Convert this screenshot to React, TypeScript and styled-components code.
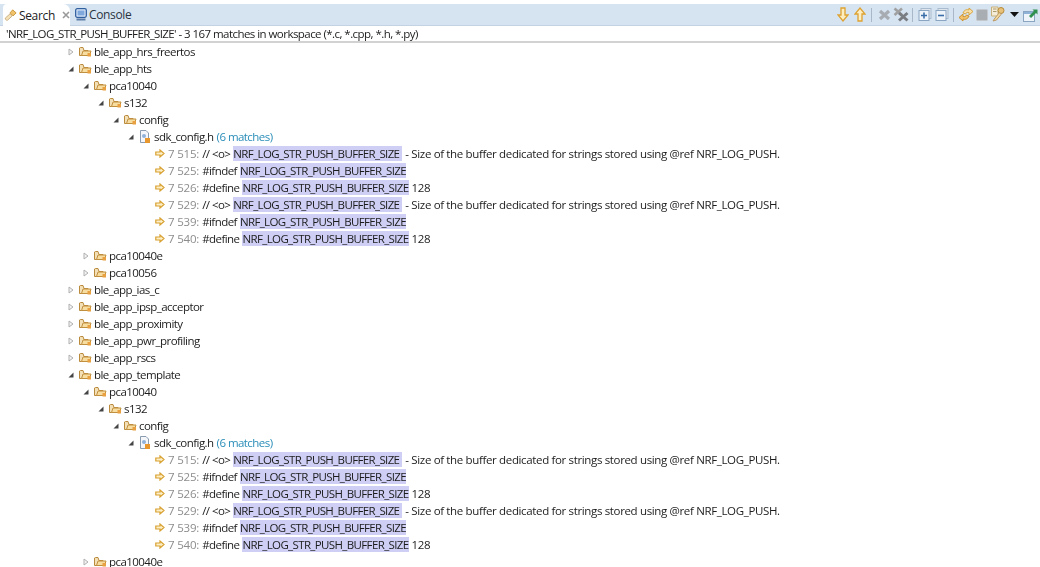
import React from "react";
import styled, { createGlobalStyle } from "styled-components";

const GlobalStyle = createGlobalStyle`
  html, body {
    margin: 0;
    height: 100%;
    overflow: hidden;
    background: #fff;
  }
  body {
    font-family: "Open Sans", "Liberation Sans", sans-serif;
    font-size: 11.5px;
    letter-spacing: -0.55px;
    color: #1c1c1c;
  }
`;

const KEY = "NRF_LOG_STR_PUSH_BUFFER_SIZE";
const DOC = "- Size of the buffer dedicated for strings stored using @ref NRF_LOG_PUSH.";

type Expander = "open" | "closed";
type Row =
  | { kind: "folder"; depth: number; name: string; expander: Expander }
  | { kind: "file"; depth: number; name: string; matches: string }
  | { kind: "match"; line: string; before: string; after?: string; padded?: boolean };

const matchRows: Row[] = [
  { kind: "match", line: "7 515:", before: "// <o>", after: DOC, padded: true },
  { kind: "match", line: "7 525:", before: "#ifndef" },
  { kind: "match", line: "7 526:", before: "#define", after: "128" },
  { kind: "match", line: "7 529:", before: "// <o>", after: DOC, padded: true },
  { kind: "match", line: "7 539:", before: "#ifndef" },
  { kind: "match", line: "7 540:", before: "#define", after: "128" }
];

const rows: Row[] = [
  { kind: "folder", depth: 0, name: "ble_app_hrs_freertos", expander: "closed" },
  { kind: "folder", depth: 0, name: "ble_app_hts", expander: "open" },
  { kind: "folder", depth: 1, name: "pca10040", expander: "open" },
  { kind: "folder", depth: 2, name: "s132", expander: "open" },
  { kind: "folder", depth: 3, name: "config", expander: "open" },
  { kind: "file", depth: 4, name: "sdk_config.h", matches: "(6 matches)" },
  ...matchRows,
  { kind: "folder", depth: 1, name: "pca10040e", expander: "closed" },
  { kind: "folder", depth: 1, name: "pca10056", expander: "closed" },
  { kind: "folder", depth: 0, name: "ble_app_ias_c", expander: "closed" },
  { kind: "folder", depth: 0, name: "ble_app_ipsp_acceptor", expander: "closed" },
  { kind: "folder", depth: 0, name: "ble_app_proximity", expander: "closed" },
  { kind: "folder", depth: 0, name: "ble_app_pwr_profiling", expander: "closed" },
  { kind: "folder", depth: 0, name: "ble_app_rscs", expander: "closed" },
  { kind: "folder", depth: 0, name: "ble_app_template", expander: "open" },
  { kind: "folder", depth: 1, name: "pca10040", expander: "open" },
  { kind: "folder", depth: 2, name: "s132", expander: "open" },
  { kind: "folder", depth: 3, name: "config", expander: "open" },
  { kind: "file", depth: 4, name: "sdk_config.h", matches: "(6 matches)" },
  ...matchRows,
  { kind: "folder", depth: 1, name: "pca10040e", expander: "closed" }
];

const FolderIcon = () => (
  <svg width="13" height="11" viewBox="0 0 13 11">
    <path d="M.5 2V9.5H9V4.5H5L4 1.5H1.5Z" fill="#f3e0b6" stroke="#b98a3c" />
    <path d="M2.5 9.5L4 5H12L10.5 9.5Z" fill="#f8dda0" stroke="#c0903f" />
    <rect x="8.5" y="7" width="3.5" height="3.5" fill="#e8a040" />
  </svg>
);

const FileIcon = () => (
  <svg width="12" height="13" viewBox="0 0 12 13">
    <path d="M1.5.5H7L9.5 3V12.5H1.5Z" fill="#f4f6fa" stroke="#8b9bb0" />
    <circle cx="5" cy="6" r="2" fill="#8fb0d8" />
    <rect x="6" y="8" width="5" height="5" fill="#e8962e" />
  </svg>
);

const MatchArrow = () => (
  <svg width="10" height="9" viewBox="0 0 10 9">
    <path d="M.8 3H5V1L9 4.5 5 8V6H.8Z" fill="#fdf0c8" stroke="#d8a030" strokeWidth="1.2" />
  </svg>
);

const ExpanderIcon = ({ state }: { state: Expander }) =>
  state === "open" ? (
    <svg width="6" height="6" viewBox="0 0 6 6">
      <path d="M5.5 .5V5.5H.5Z" fill="#444" />
    </svg>
  ) : (
    <svg width="6" height="8" viewBox="0 0 6 8">
      <path d="M1 1L5 4 1 7Z" fill="#f4f4f4" stroke="#b0b0b0" />
    </svg>
  );

const SearchIcon = () => (
  <svg width="13" height="13" viewBox="0 0 15 15">
    <path d="M7 4.5L10 1 14 4.5 10.5 8Z" fill="#f1c46c" stroke="#c58f2e" />
    <path d="M7 5.5L9.5 8 4 13C3 13.5 1 12 1.5 10.5Z" fill="#f7e2b8" stroke="#c4a878" />
  </svg>
);

const ConsoleIcon = () => (
  <svg width="12" height="13" viewBox="0 0 12 13">
    <rect x=".7" y=".7" width="10.6" height="8.6" rx="1.5" fill="#dfeafa" stroke="#2f5f9e" strokeWidth="1.3" />
    <rect x="2.5" y="2.5" width="7" height="5" fill="#7ea8dc" />
    <rect x="1.5" y="10.5" width="9" height="2" fill="#5d7ea8" />
  </svg>
);

const ArrowDown = () => (
  <svg width="12" height="15" viewBox="0 0 12 15">
    <path d="M4 1H8V8H11L6 14 1 8H4Z" fill="#fdeec2" stroke="#dda232" strokeWidth="1.3" />
  </svg>
);

const ArrowUp = () => (
  <svg width="12" height="15" viewBox="0 0 12 15">
    <path d="M4 14H8V7H11L6 1 1 7H4Z" fill="#fdeec2" stroke="#dda232" strokeWidth="1.3" />
  </svg>
);

const RemoveOne = () => (
  <svg width="13" height="12" viewBox="0 0 13 12">
    <path d="M2 2L11 10M11 2L2 10" stroke="#a7acb2" strokeWidth="3.2" />
  </svg>
);

const RemoveAll = () => (
  <svg width="16" height="15" viewBox="0 0 16 15">
    <path d="M1.5 1.5L9 8M9 1.5L1.5 8" stroke="#a0a0a0" strokeWidth="2.6" />
    <path d="M6 6L14.5 13.5M14.5 6L6 13.5" stroke="#7a7e83" strokeWidth="3" />
  </svg>
);

const TreeBox = ({ plus }: { plus?: boolean }) => (
  <svg width="14" height="13" viewBox="0 0 14 13">
    <rect x="3" y=".5" width="10" height="10" fill="#dfe6ee" stroke="#a9bbcf" />
    <rect x="1" y="2.5" width="10" height="10" fill="#eef4fa" stroke="#8aa5c2" />
    <path d={plus ? "M3 7.5H9M6 4.5V10.5" : "M3 7.5H9"} stroke="#3b6ea8" strokeWidth="1.6" />
  </svg>
);

const SyncIcon = () => (
  <svg width="16" height="15" viewBox="0 0 16 15">
    <path d="M5 6C6 3 9 2 11 3L11 1 15 4.5 11 8 11 5.5C9.5 5 8 5.5 7.5 7Z" fill="#f8e0a8" stroke="#d9a640" />
    <path d="M11 9C10 12 7 13 5 12L5 14 1 10.5 5 7 5 9.5C6.5 10 8 9.5 8.5 8Z" fill="#f3c26a" stroke="#cc9230" />
  </svg>
);

const StopIcon = () => (
  <svg width="12" height="12" viewBox="0 0 12 12">
    <rect x=".5" y=".5" width="11" height="11" rx="1" fill="#a9aeb3" stroke="#c4c8cc" />
  </svg>
);

const PinIcon = () => (
  <svg width="16" height="17" viewBox="0 0 16 17">
    <path d="M1.5 1H8V10H1.5Z" fill="#f4ecd6" stroke="#c8b27c" />
    <path d="M3 3H6.5M3 5.5H6.5" stroke="#a89a70" />
    <circle cx="11" cy="4.5" r="3" fill="#e8c27a" stroke="#b68a3a" />
    <path d="M9.5 6.5L5 12 3 15 6.5 14 11 8.5Z" fill="#f3d99e" stroke="#bb9a66" />
  </svg>
);

const MenuCaret = () => (
  <svg width="9" height="5" viewBox="0 0 9 5">
    <path d="M0 0H9L4.5 5Z" fill="#111" />
  </svg>
);

const NewViewIcon = () => (
  <svg width="15" height="14" viewBox="0 0 15 14">
    <rect x=".5" y="3.5" width="11" height="10" fill="#eef4fa" stroke="#8aa5c2" />
    <rect x="1" y="4" width="10" height="2" fill="#8fb2d8" />
    <path d="M6 8L11 3 9.5 1.5H14.5V6.5L13 5 8 10Z" fill="#2f8f4e" />
  </svg>
);

const Page = styled.div`
  height: 567px;
  display: flex;
  flex-direction: column;
  overflow: hidden;
  filter: blur(0.3px);
`;

const TabStrip = styled.div`
  margin-top: 4px;
  height: 21px;
  flex: none;
  display: flex;
  align-items: stretch;
  justify-content: space-between;
  background: #d6e4f2;
  border-bottom: 1px solid #c3d3e4;
`;

const Tabs = styled.div`
  display: flex;
  align-items: stretch;
  padding-left: 3px;
`;

const Tab = styled.div<{ $active?: boolean }>`
  display: flex;
  align-items: center;
  font-size: 12px;
  letter-spacing: -0.35px;
  width: ${(p) => (p.$active ? "67px" : "auto")};
  box-sizing: border-box;
  padding-left: ${(p) => (p.$active ? "1px" : "5px")};
  gap: 2px;
  background: ${(p) => (p.$active ? "#fff" : "transparent")};
  border-radius: ${(p) => (p.$active ? "4px 7px 0 0" : "0")};
  margin-bottom: ${(p) => (p.$active ? "-1px" : "0")};
  color: ${(p) => (p.$active ? "#222" : "#2b3441")};
`;

const CloseMark = styled.span`
  width: 8px;
  height: 8px;
  margin-left: 5px;
  display: flex;
`;

const Toolbar = styled.div`
  display: flex;
  align-items: center;
  padding-right: 1.5px;
`;

const ToolSlot = styled.span<{ $w: number }>`
  width: ${(p) => p.$w}px;
  display: flex;
  justify-content: center;
  align-items: center;
`;

const ToolSep = styled.span`
  width: 1px;
  height: 14px;
  margin: 0 4px 0 2px;
  background: #a9b8c8;
`;

const Summary = styled.div`
  height: 15px;
  flex: none;
  line-height: 15px;
  padding-left: 6px;
  border-bottom: 2px solid #d2d2d2;
  white-space: nowrap;
`;

const KeyText = styled.span`
  letter-spacing: -0.63px;
`;

const Tree = styled.div`
  flex: 1;
  overflow: hidden;
`;

const TreeRow = styled.div<{ $depth: number }>`
  height: 17px;
  display: flex;
  align-items: center;
  white-space: nowrap;
  padding-left: ${(p) => 68 + p.$depth * 15}px;
`;

const ExpanderSlot = styled.span`
  width: 11px;
  flex: none;
  display: flex;
`;

const NodeIcon = styled.span`
  width: 15px;
  flex: none;
  display: flex;
`;

const MatchRow = styled.div`
  height: 17px;
  display: flex;
  align-items: center;
  white-space: nowrap;
  padding-left: 155px;
`;

const LineNumber = styled.span`
  color: #8d8d8d;
  margin: 0 3px;
  letter-spacing: -0.2px;
`;

const Highlight = styled.span<{ $padded?: boolean }>`
  background: #cfcff6;
  margin: 0 3px;
  padding-right: ${(p) => (p.$padded ? "3px" : "0")};
  letter-spacing: -0.63px;
`;

const AfterText = styled.span`
  letter-spacing: -0.35px;
`;

const MatchCount = styled.span`
  color: #2a8db8;
  margin-left: 3px;
`;

export default function App() {
  return (
    <Page>
      <GlobalStyle />
      <TabStrip>
        <Tabs>
          <Tab $active>
            <SearchIcon />
            Search
            <CloseMark>
              <svg width="8" height="8" viewBox="0 0 8 8">
                <path d="M1 1L7 7M7 1L1 7" stroke="#9a9a9a" strokeWidth="1.6" />
              </svg>
            </CloseMark>
          </Tab>
          <Tab>
            <ConsoleIcon />
            Console
          </Tab>
        </Tabs>
        <Toolbar>
          <ToolSlot $w={17}><ArrowDown /></ToolSlot>
          <ToolSlot $w={17}><ArrowUp /></ToolSlot>
          <ToolSep />
          <ToolSlot $w={17}><RemoveOne /></ToolSlot>
          <ToolSlot $w={17}><RemoveAll /></ToolSlot>
          <ToolSep />
          <ToolSlot $w={17}><TreeBox plus /></ToolSlot>
          <ToolSlot $w={17}><TreeBox /></ToolSlot>
          <ToolSep />
          <ToolSlot $w={16}><SyncIcon /></ToolSlot>
          <ToolSlot $w={16}><StopIcon /></ToolSlot>
          <ToolSlot $w={17}><PinIcon /></ToolSlot>
          <ToolSlot $w={15}><MenuCaret /></ToolSlot>
          <ToolSlot $w={17}><NewViewIcon /></ToolSlot>
        </Toolbar>
      </TabStrip>
      <Summary>'<KeyText>{KEY}</KeyText>' - 3 167 matches in workspace (*.c, *.cpp, *.h, *.py)</Summary>
      <Tree>
        {rows.map((row, i) => {
          if (row.kind === "match") {
            return (
              <MatchRow key={i}>
                <MatchArrow />
                <LineNumber>{row.line}</LineNumber>
                {row.before}
                <Highlight $padded={row.padded}>{KEY}</Highlight>
                <AfterText>{row.after}</AfterText>
              </MatchRow>
            );
          }
          return (
            <TreeRow key={i} $depth={row.depth}>
              <ExpanderSlot>
                <ExpanderIcon state={row.kind === "folder" ? row.expander : "open"} />
              </ExpanderSlot>
              <NodeIcon>{row.kind === "folder" ? <FolderIcon /> : <FileIcon />}</NodeIcon>
              {row.name}
              {row.kind === "file" && <MatchCount>{row.matches}</MatchCount>}
            </TreeRow>
          );
        })}
      </Tree>
    </Page>
  );
}
